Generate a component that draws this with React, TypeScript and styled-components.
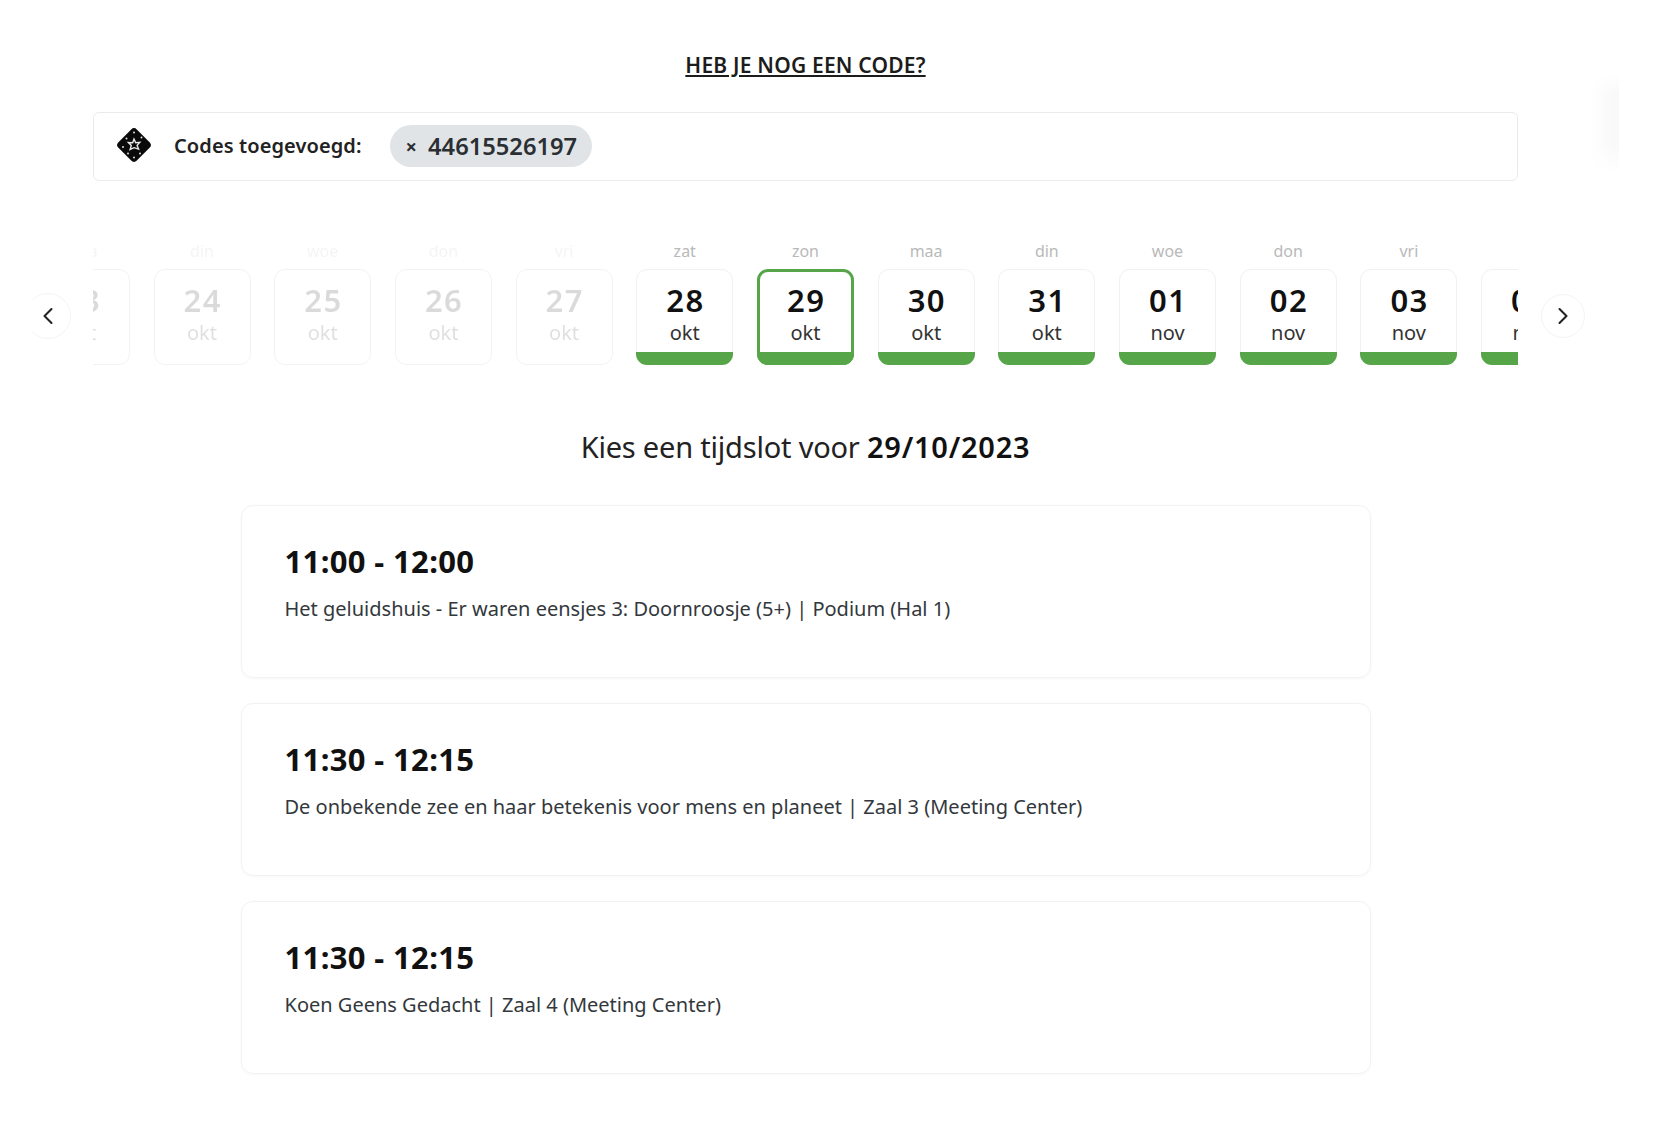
import React from 'react';
import styled, { createGlobalStyle } from 'styled-components';
import { ChevronLeft, ChevronRight } from 'lucide-react';

const FONT = '"Noto Sans", "Open Sans", sans-serif';

const GlobalStyle = createGlobalStyle`
  html, body {
    margin: 0;
    padding: 0;
    background: #fff;
  }
  body {
    font-family: ${FONT};
    color: #111;
  }
`;

const Page = styled.main`
  position: relative;
  width: 1425px;
  height: 1140px;
  margin-left: 93px;
  padding-top: 53px;
  box-sizing: border-box;
`;

const SideGlow = styled.div`
  position: absolute;
  left: 1498px;
  top: 74px;
  width: 28px;
  height: 100px;
  background: linear-gradient(90deg, #fff, #f9f9f9 75%);
  mask-image: linear-gradient(180deg, transparent, #000 20%, #000 70%, transparent);
`;

const CodeLink = styled.a`
  display: block;
  text-align: center;
  font-size: 21px;
  line-height: 24px;
  font-weight: 600;
  color: #1c1c1c;
  text-decoration: underline;
  letter-spacing: 0.2px;
`;

const CodesBar = styled.section`
  display: flex;
  align-items: center;
  height: 69px;
  margin-top: 35px;
  padding: 0 0 3px 22px;
  box-sizing: border-box;
  border: 1px solid #ebebeb;
  border-radius: 6px;
`;

const CodesLabel = styled.span`
  margin-left: 22px;
  font-size: 20px;
  font-weight: 600;
  color: #222;
  letter-spacing: 0.1px;
`;

const CodeChip = styled.span`
  display: inline-flex;
  align-items: center;
  height: 42px;
  margin: 2px 0 0 28px;
  padding: 0 15px 0 16px;
  border-radius: 21px;
  background: #e1e4e6;
  font-size: 23.7px;
  font-weight: 600;
  color: #2a2f33;
`;

const ChipClose = styled.span`
  margin-right: 11px;
  font-size: 20px;
  font-weight: 700;
`;

const Carousel = styled.section`
  display: flex;
  align-items: flex-end;
  margin: 59px 0 0 -68px;
`;

const ArrowButton = styled.button<{ $size: number; $clip?: boolean }>`
  display: flex;
  align-items: center;
  justify-content: center;
  flex: none;
  width: ${({ $size }) => $size}px;
  height: ${({ $size }) => $size}px;
  margin-bottom: ${({ $size }) => 49 - $size / 2}px;
  padding: 0;
  background: #fff;
  border: 1px solid #f4f4f4;
  border-radius: 50%;
  color: #222;
  clip-path: ${({ $clip }) => ($clip ? 'inset(0 0 0 7px)' : 'none')};
`;

const Viewport = styled.div`
  flex: none;
  width: 1425px;
  margin: 0 23px 0 22px;
  overflow: hidden;
`;

const Track = styled.div`
  display: flex;
  gap: 23.7px;
  margin-left: -60.2px;
`;

const DayColumn = styled.div<{ $past?: boolean }>`
  flex: none;
  width: 97px;
  opacity: ${({ $past }) => ($past ? 0.15 : 1)};
`;

const Weekday = styled.div`
  height: 22px;
  margin-bottom: 7px;
  text-align: center;
  font-size: 16px;
  line-height: 22px;
  color: #b9b9b9;
`;

const DayCard = styled.div<{ $selected?: boolean; $past?: boolean }>`
  position: relative;
  display: flex;
  flex-direction: column;
  align-items: center;
  height: 96px;
  box-sizing: border-box;
  padding-top: ${({ $selected }) => ($selected ? '10px' : '12px')};
  border: ${({ $selected, $past }) =>
    $selected ? '3px solid #56a548' : `1px solid ${$past ? '#aaa' : '#f1f1f1'}`};
  border-radius: 11px;
  &::after {
    content: '';
    display: ${({ $past }) => ($past ? 'none' : 'block')};
    position: absolute;
    left: ${({ $selected }) => ($selected ? '-3px' : '-1px')};
    right: ${({ $selected }) => ($selected ? '-3px' : '-1px')};
    bottom: ${({ $selected }) => ($selected ? '-3px' : '-1px')};
    height: 13px;
    border-radius: 0 0 11px 11px;
    background: #56a548;
  }
`;

const DayNumber = styled.div`
  padding-left: 1.5px;
  font-size: 31px;
  line-height: 36px;
  font-weight: 600;
  letter-spacing: 1.5px;
  color: #111;
`;

const MonthName = styled.div`
  margin-top: 2px;
  font-size: 20px;
  line-height: 26px;
  color: #333;
`;

const SlotHeading = styled.h2`
  margin: 63px 0 39px;
  text-align: center;
  font-size: 29px;
  line-height: 38px;
  font-weight: 400;
  letter-spacing: -0.2px;
  color: #222;
  b {
    font-weight: 600;
    letter-spacing: 0.75px;
    color: #111;
  }
`;

const SlotList = styled.div`
  display: flex;
  flex-direction: column;
  gap: 25px;
  width: 1130px;
  margin: 0 auto;
`;

const SlotCard = styled.article`
  height: 173px;
  box-sizing: border-box;
  padding: 35px 43px 0;
  border: 1px solid #f2f2f2;
  border-radius: 12px;
  box-shadow: 0 1px 3px rgba(0, 0, 0, 0.03);
`;

const SlotTime = styled.h3`
  margin: 0;
  font-size: 31px;
  line-height: 40px;
  font-weight: 700;
  letter-spacing: 0.35px;
  color: #111;
`;

const SlotTitle = styled.p`
  margin: 14px 0 0;
  font-size: 20px;
  line-height: 28px;
  color: #33383c;
`;

function TicketIcon() {
  return (
    <svg width="36" height="38" viewBox="0 0 36 38" aria-hidden="true">
      <rect x="5" y="6" width="26" height="26" rx="4" transform="rotate(45 18 19)" fill="#0a0a0a" />
      <path
        d="M18 13l1.7 3.7 4.1-.3-2.7 3 1.5 3.8-4.5-1.5-4 1.8 1.2-4.1-2.9-2.9 4.3.2z"
        fill="none"
        stroke="#e8e8e8"
        strokeWidth="1.4"
      />
      <g fill="#e0e0e0">
        <circle cx="18" cy="6.5" r="1" />
        <circle cx="25.5" cy="11.5" r="1" />
        <circle cx="10.5" cy="12.5" r="1" />
        <circle cx="7" cy="21" r="1" />
        <circle cx="12" cy="27.5" r="1" />
        <circle cx="24" cy="27.5" r="1" />
        <circle cx="18" cy="31.5" r="1" />
      </g>
    </svg>
  );
}

const DAYS = [
  { weekday: 'maa', day: '23', month: 'okt', past: true },
  { weekday: 'din', day: '24', month: 'okt', past: true },
  { weekday: 'woe', day: '25', month: 'okt', past: true },
  { weekday: 'don', day: '26', month: 'okt', past: true },
  { weekday: 'vri', day: '27', month: 'okt', past: true },
  { weekday: 'zat', day: '28', month: 'okt' },
  { weekday: 'zon', day: '29', month: 'okt', selected: true },
  { weekday: 'maa', day: '30', month: 'okt' },
  { weekday: 'din', day: '31', month: 'okt' },
  { weekday: 'woe', day: '01', month: 'nov' },
  { weekday: 'don', day: '02', month: 'nov' },
  { weekday: 'vri', day: '03', month: 'nov' },
  { weekday: 'zat', day: '04', month: 'nov' },
];

const SLOTS = [
  { time: '11:00 - 12:00', title: 'Het geluidshuis - Er waren eensjes 3: Doornroosje (5+) | Podium (Hal 1)' },
  { time: '11:30 - 12:15', title: 'De onbekende zee en haar betekenis voor mens en planeet | Zaal 3 (Meeting Center)' },
  { time: '11:30 - 12:15', title: 'Koen Geens Gedacht | Zaal 4 (Meeting Center)' },
];

export default function App() {
  return (
    <Page>
      <GlobalStyle />
      <SideGlow />
      <CodeLink>HEB JE NOG EEN CODE?</CodeLink>
      <CodesBar>
        <TicketIcon />
        <CodesLabel>Codes toegevoegd:</CodesLabel>
        <CodeChip>
          <ChipClose>×</ChipClose>
          44615526197
        </CodeChip>
      </CodesBar>
      <Carousel>
        <ArrowButton $size={46} $clip>
          <ChevronLeft size={28} strokeWidth={1.8} />
        </ArrowButton>
        <Viewport>
          <Track>
            {DAYS.map((d) => (
              <DayColumn key={d.day} $past={d.past}>
                <Weekday>{d.weekday}</Weekday>
                <DayCard $selected={d.selected} $past={d.past}>
                  <DayNumber>{d.day}</DayNumber>
                  <MonthName>{d.month}</MonthName>
                </DayCard>
              </DayColumn>
            ))}
          </Track>
        </Viewport>
        <ArrowButton $size={44}>
          <ChevronRight size={28} strokeWidth={1.8} />
        </ArrowButton>
      </Carousel>
      <SlotHeading>
        Kies een tijdslot voor <b>29/10/2023</b>
      </SlotHeading>
      <SlotList>
        {SLOTS.map((s) => (
          <SlotCard key={s.title}>
            <SlotTime>{s.time}</SlotTime>
            <SlotTitle>{s.title}</SlotTitle>
          </SlotCard>
        ))}
      </SlotList>
    </Page>
  );
}
